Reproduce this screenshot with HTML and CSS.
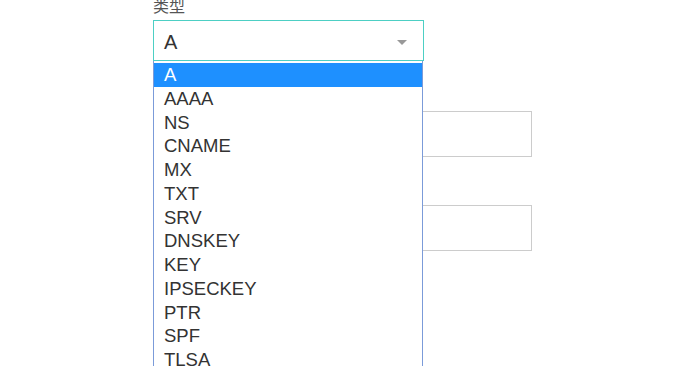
FILE: index.html
```html
<!DOCTYPE html>
<html lang="zh-CN">

<head>
  <meta charset="UTF-8">
  <meta name="viewport" content="width=device-width, initial-scale=1.0">
  <title>添加解析记录</title>
  <link rel="stylesheet" href="styles.css">
</head>

<body>
  <form class="record-form">
    <div class="field field-type">
      <label class="field-label">类型</label>
      <div class="select">
        <span class="select-value">A</span>
        <span class="select-arrow"></span>
        <ul class="select-list">
          <li class="active">A</li>
          <li>AAAA</li>
          <li>NS</li>
          <li>CNAME</li>
          <li>MX</li>
          <li>TXT</li>
          <li>SRV</li>
          <li>DNSKEY</li>
          <li>KEY</li>
          <li>IPSECKEY</li>
          <li>PTR</li>
          <li>SPF</li>
          <li>TLSA</li>
          <li>CAA</li>
          <li>DS</li>
        </ul>
      </div>
    </div>
    <div class="field field-name">
      <label class="field-label">名称</label>
      <input class="text-input" type="text">
    </div>
    <div class="field field-value">
      <label class="field-label">记录值</label>
      <input class="text-input" type="text">
    </div>
  </form>
</body>

</html>
```

FILE: styles.css
```css
* {
  padding: 0;
  margin: 0;
  box-sizing: border-box;
}

html,
body {
  height: 100%;
  overflow: hidden;
  background: #fff;
}

body {
  font-family: "Liberation Sans", Arial, "Noto Sans CJK SC", sans-serif;
  color: #333;
}

.record-form {
  display: flex;
  flex-direction: column;
  padding-left: 153px;
  margin-top: -5px;
}

.field {
  display: flex;
  flex-direction: column;
}

.field-name {
  margin-top: 25px;
}

.field-value {
  margin-top: 23px;
}

.field-label {
  height: 20px;
  line-height: 20px;
  margin-bottom: 5px;
  font-family: "Noto Sans CJK SC", sans-serif;
  font-size: 16px;
  color: #555;
}

.select {
  position: relative;
  width: 271px;
  height: 41px;
  border: 1px solid #4dcfc4;
  display: flex;
  align-items: center;
  padding: 3px 0 0 10px;
}

.select-value {
  font-size: 20px;
  color: #333;
}

.select-arrow {
  position: absolute;
  right: 16px;
  top: 19px;
  width: 0;
  height: 0;
  border-left: 5px solid transparent;
  border-right: 5px solid transparent;
  border-top: 5px solid #999;
}

/* 下拉列表盖在下面的输入框上 */
.select-list {
  position: absolute;
  left: -1px;
  top: 40px;
  width: 270px;
  list-style: none;
  background: #fff;
  border: 1px solid #7b9bd9;
  border-top: 0;
  padding-top: 2px;
  z-index: 10;
}

.select-list li {
  height: 23.75px;
  line-height: 23.75px;
  padding-left: 10px;
  font-size: 18.5px;
  color: #333;
}

.select-list li.active {
  background: #1e90ff;
  color: #fff;
}

.text-input {
  width: 379px;
  height: 46px;
  border: 1px solid #ccc;
  outline: none;
  padding: 0 10px;
  font-size: 16px;
}
```
